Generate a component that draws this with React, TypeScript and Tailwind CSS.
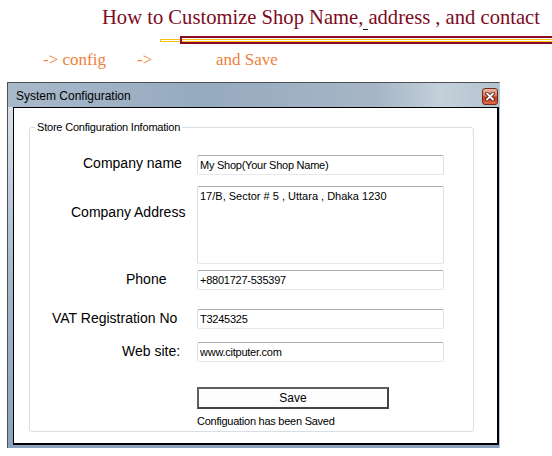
import React from "react";

const field =
  "h-[20px] w-[247px] shrink-0 border border-t-[#abadb3] border-l-[#dbdfe6] border-r-[#dbdfe6] border-b-[#e3e9ef] rounded-[2px] pl-[2px] text-[11px] leading-[18px] tracking-[-0.25px] text-black bg-white whitespace-nowrap overflow-hidden";

export default function App() {
  return (
    <div className="w-[552px] h-[456px] bg-white overflow-hidden font-[family-name:'Liberation_Sans',Arial,sans-serif]">
      <div className="h-[29px] pt-[5px] pl-[102px] whitespace-nowrap text-[20.6px] leading-[24px] text-[#7d0b1e] font-[family-name:'Liberation_Serif',serif]">
        How to Customize Shop Name,
        <span className="inline-block relative top-[6px] w-[5px] h-[1px] bg-[#222]"></span>
        address , and contact
      </div>

      <div className="mt-[7px] ml-[160px] h-[8px] flex items-center">
        <div className="w-[20px] h-[3px] border-y border-l border-[#f6c10f]"></div>
        <div className="flex-1 h-[8px] border-2 border-r-0 border-[#8b0a25] flex items-center">
          <div className="w-full h-[3px] border-y border-[#f6c10f]"></div>
        </div>
      </div>

      <div className="mt-[6px] pl-[43px] h-[20px] flex whitespace-nowrap text-[17px] leading-[20px] text-[#ef7f3a] font-[family-name:'Liberation_Serif',serif]">
        <span className="w-[94px] shrink-0">-&gt; config</span>
        <span className="w-[79px] shrink-0">-&gt;</span>
        <span>and Save</span>
      </div>

      <div className="ml-[7px] mt-[12px] w-[493px] h-[366px] border-l border-t border-[#505050] border-r border-r-[#b4c8dc] bg-[linear-gradient(to_bottom,#dfe6ed,#a3b6ca_55%,#8aa2bd)] flex flex-col">
        <div className="h-[24px] shrink-0 flex items-start justify-between pt-[5px] pl-[8px] pr-[1px] bg-[linear-gradient(to_right,#a8b9cb_0%,#96aabf_40%,#a6b6c6_75%,#c4d0da_88%,#b5c3d0_100%)]">
          <div className="text-[12px] leading-[16px] text-black whitespace-nowrap">System Configuration</div>
          <div className="w-[16px] h-[17px] rounded-[3px] border border-[#6e2a1e] bg-[linear-gradient(to_bottom,#ecb9a4,#d97a5e_45%,#c23b1e_55%,#dc6a46)] flex items-center justify-center">
            <svg width="10" height="9" viewBox="0 0 10 9">
              <path d="M2 1.5 L8 7.5 M8 1.5 L2 7.5" stroke="#4a1a12" strokeWidth="3.4" strokeLinecap="square" />
              <path d="M2 1.5 L8 7.5 M8 1.5 L2 7.5" stroke="#ffffff" strokeWidth="1.8" strokeLinecap="square" />
            </svg>
          </div>
        </div>

        <div className="ml-[5px] h-[338px] shrink-0 bg-white border-l border-t border-r-2 border-b-2 border-black">
          <div className="ml-[15px] mt-[19px] w-[445px] h-[305px] relative border border-[#d5dfe5] rounded-[3px] flex flex-col">
            <div className="absolute left-[5px] top-[-8px] bg-white px-[2px] text-[11px] leading-[14px] tracking-[-0.2px] text-black whitespace-nowrap">
              Store Configuration Infomation
            </div>

            <div className="mt-[27px] flex items-start">
              <div className="w-[167px] shrink-0 pl-[53px] text-[14px] leading-[16px] text-black whitespace-nowrap">
                Company name
              </div>
              <div className={field}>My Shop(Your Shop Name)</div>
            </div>

            <div className="mt-[11px] flex items-start">
              <div className="w-[167px] shrink-0 pl-[41px] pt-[18px] text-[14px] leading-[16px] text-black whitespace-nowrap">
                Company Address
              </div>
              <div className="h-[78px] w-[247px] shrink-0 border border-t-[#abadb3] border-l-[#dbdfe6] border-r-[#dbdfe6] border-b-[#e3e9ef] rounded-[2px] pl-[2px] pt-[2px] text-[11px] leading-[14px] text-black bg-white whitespace-nowrap">
                17/B, Sector # 5 , Uttara , Dhaka 1230
              </div>
            </div>

            <div className="mt-[6px] flex items-start">
              <div className="w-[167px] shrink-0 pl-[96px] pt-[1px] text-[14px] leading-[16px] text-black whitespace-nowrap">
                Phone
              </div>
              <div className={field}>+8801727-535397</div>
            </div>

            <div className="mt-[19px] flex items-start">
              <div className="w-[167px] shrink-0 pl-[22px] pt-[1px] text-[14px] leading-[16px] text-black whitespace-nowrap">
                VAT Registration No
              </div>
              <div className={field}>T3245325</div>
            </div>

            <div className="mt-[13px] flex items-start">
              <div className="w-[167px] shrink-0 pl-[92px] pt-[1px] text-[14px] leading-[16px] text-black whitespace-nowrap">
                Web site:
              </div>
              <div className={field}>www.citputer.com</div>
            </div>

            <div className="mt-[25px] ml-[167px] w-[192px] h-[22px] border-2 border-t-[#5e5e5e] border-l-[#5e5e5e] border-r-[#444] border-b-[#444] bg-[#fdfdfd] flex items-center justify-center text-[12px] leading-[14px] text-black">
              Save
            </div>

            <div className="mt-[5px] ml-[167px] text-[11px] leading-[14px] tracking-[-0.25px] text-black whitespace-nowrap">
              Configuation has been Saved
            </div>
          </div>
        </div>
      </div>
    </div>
  );
}
